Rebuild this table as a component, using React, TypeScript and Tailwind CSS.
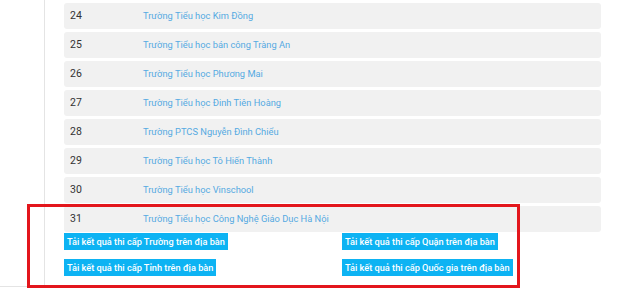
import React from 'react';

const schools: [number, string][] = [
  [24, 'Trường Tiểu học Kim Đồng'],
  [25, 'Trường Tiểu học bán công Tràng An'],
  [26, 'Trường Tiểu học Phương Mai'],
  [27, 'Trường Tiểu học Đinh Tiên Hoàng'],
  [28, 'Trường PTCS Nguyễn Đình Chiểu'],
  [29, 'Trường Tiểu học Tô Hiến Thành'],
  [30, 'Trường Tiểu học Vinschool'],
  [31, 'Trường Tiểu học Công Nghệ Giáo Dục Hà Nội'],
];

const DownloadButton: React.FC<{ label: string }> = ({ label }) => (
  <button className="h-[17px] px-[3px] bg-[#0db3f3] text-white text-[9.2px] font-medium leading-[17px] whitespace-nowrap">
    {label}
  </button>
);

const App: React.FC = () => {
  return (
    <div
      className="relative w-[640px] h-[297px] overflow-hidden bg-white text-[#333]"
      style={{ fontFamily: 'Roboto, "Noto Sans", sans-serif' }}
    >
      <div className="w-[520px] border-b border-[#e4e4e4]">
        <div className="ml-[44px] w-[557px] border-l border-[#e4e4e4] pl-[19px] pt-[3px] pb-[10px]">
          <div className="flex flex-col gap-[3px]">
            {schools.map(([no, name]) => (
              <div key={no} className="flex items-center h-[26px] w-[537px] rounded-[3px] bg-[#f1f1f1] pl-[6px]">
                <span className="w-[73px] text-[10.5px]">{no}</span>
                <a className="text-[#55aae2] text-[9.3px]">{name}</a>
              </div>
            ))}
          </div>
          <div className="grid grid-cols-[278px_1fr] gap-y-[9px] mt-[1px] justify-items-start">
            <DownloadButton label="Tải kết quả thi cấp Trường trên địa bàn" />
            <DownloadButton label="Tải kết quả thi cấp Quận trên địa bàn" />
            <DownloadButton label="Tải kết quả thi cấp Tỉnh trên địa bàn" />
            <DownloadButton label="Tải kết quả thi cấp Quốc gia trên địa bàn" />
          </div>
        </div>
      </div>

      {/* red highlight frame drawn over the list */}
      <div className="absolute left-[27px] top-[204px] w-[493px] h-[84px] border-[3px] border-[#e3161c] pointer-events-none" />
    </div>
  );
};

export default App;
